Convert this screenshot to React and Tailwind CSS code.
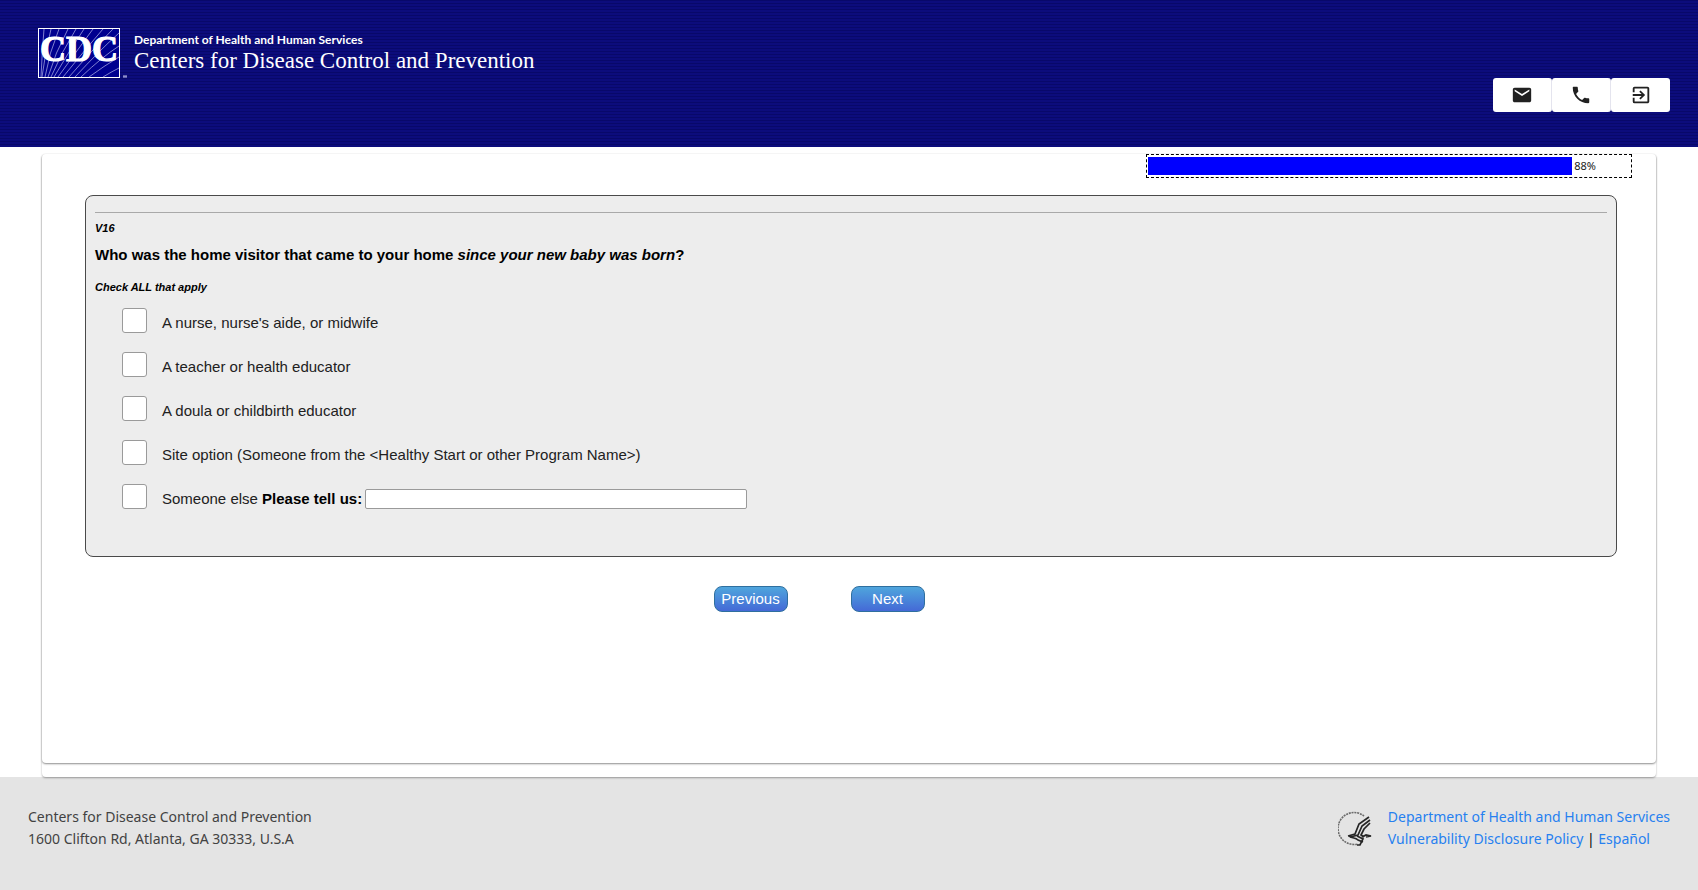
import { useState } from "react"
import { MdEmail, MdPhone, MdExitToApp } from "react-icons/md"

const options = [
    { id: "nurse", label: "A nurse, nurse's aide, or midwife" },
    { id: "teacher", label: "A teacher or health educator" },
    { id: "doula", label: "A doula or childbirth educator" },
    { id: "site", label: "Site option (Someone from the <Healthy Start or other Program Name>)" },
]

const checkboxStyle = "h-[25px] w-[25px] shrink-0 appearance-none rounded-[3px] border border-[#9a9a9a] bg-white checked:bg-[#0075ff]"

const CdcLogo = () => (
    <svg width="90" height="50" viewBox="0 0 90 50" role="img" aria-label="CDC">
        <rect x="0.5" y="0.5" width="81" height="49" fill="#00008f" stroke="#fff" />
        <g stroke="#8c8cd6" strokeWidth="0.9" fill="none">
            <path d="M6 1 Q4 25 3 49" />
            <path d="M13 1 Q7 25 4 49" />
            <path d="M21 1 Q11 25 7 49" />
            <path d="M30 1 Q17 25 10 49" />
            <path d="M38 1 Q23 25 13 49" />
            <path d="M46 1 Q30 25 16 49" />
            <path d="M55 1 Q38 24 20 49" />
            <path d="M65 1 Q46 23 25 49" />
            <path d="M75 1 Q54 22 31 49" />
            <path d="M81 5 Q62 22 37 49" />
            <path d="M81 18 Q64 29 43 49" />
            <path d="M81 29 Q66 38 51 49" />
            <path d="M81 40 Q73 44 65 49" />
        </g>
        <text x="41" y="33" textAnchor="middle" fill="#fff" stroke="#fff" strokeWidth="1.2" fontFamily="Liberation Serif, serif" fontWeight="700" fontSize="36">CDC</text>
        <path d="M85 48 h4 M86 48 v2 M88 48 v2" stroke="#b9b9e6" strokeWidth="1" />
    </svg>
)

const HhsSeal = () => (
    <svg width="34" height="36" viewBox="0 0 34 36" role="img" aria-label="HHS">
        <path d="M26 5 A16 16 0 1 0 20 33" fill="none" stroke="#6b6b6b" strokeWidth="1.6" strokeDasharray="2 0.8" />
        <g fill="none" stroke="#262626" strokeWidth="1.7">
            <path d="M31 6 L21 13 L17 23 L10 25" />
            <path d="M32 9 L24 15 L20 24 L12 26" />
            <path d="M32 12 L26 18 L23 24 L26 26" />
            <path d="M11 25 C15 28 17 26 20 29 L25 31" />
            <path d="M19 25 L25 28 L22 34 L19 34" />
            <path d="M24 26 L28 24 L33 25 L28 26" />
        </g>
    </svg>
)

const Header = () => (
    <header className="flex h-[147px] items-start justify-between bg-[#0a0a78] bg-[repeating-linear-gradient(to_bottom,#08086a_0px,#08086a_1px,#0c0c7c_1px,#0c0c7c_3px)] pl-[38px] pr-7">
        <div className="flex items-start gap-[6px] pt-7 text-white">
            <CdcLogo />
            <div className="pt-1">
                <p className="font-[Lato] text-[12px] leading-4 font-bold">Department of Health and Human Services</p>
                <p className="font-['Liberation_Serif'] text-[23px] leading-[26px]">Centers for Disease Control and Prevention</p>
            </div>
        </div>
        <nav className="flex pt-[78px] text-[#212121]">
            <button aria-label="Email" className="flex h-[34px] w-[59px] items-center justify-center rounded-[3px] border-r border-[#e4e4ee] bg-white"><MdEmail size={22} /></button>
            <button aria-label="Phone" className="flex h-[34px] w-[59px] items-center justify-center rounded-[3px] border-r border-[#e4e4ee] bg-white"><MdPhone size={22} /></button>
            <button aria-label="Exit" className="flex h-[34px] w-[59px] items-center justify-center rounded-[3px] bg-white"><MdExitToApp size={22} /></button>
        </nav>
    </header>
)

const ProgressBar = ({ percent }) => (
    <div className="mr-6 ml-auto flex h-6 w-[486px] items-center border border-dashed border-black p-px" role="progressbar" aria-label="Survey progress" aria-valuenow={percent}>
        <div className="h-[18px] bg-[#0000ff]" style={{ width: `${percent}%` }}></div>
        <span className="ml-[2px] font-['Noto_Sans'] text-[11px] leading-4 text-[#212121]">{percent}%</span>
    </div>
)

const Question = () => {
    const [selected, setSelected] = useState([])
    const [other, setOther] = useState("")

    const handleToggle = (id) => {
        setSelected(selected.includes(id) ? selected.filter(item => item !== id) : [...selected, id])
    }

    return (
        <section className="mt-[17px] mr-[39px] ml-[43px] rounded-lg border border-[#4a4a4a] bg-[#ededed] px-[9px] pt-4 pb-[45px] font-['Liberation_Sans'] text-black">
            <hr className="border-[#a9a9a9]" />
            <p className="mt-[7px] text-[11px] leading-4 font-bold italic">V16</p>
            <h1 className="mt-[9px] text-[15px] leading-5 font-bold">
                Who was the home visitor that came to your home <em>since your new baby was born</em>?
            </h1>
            <p className="mt-[14px] text-[11px] leading-4 font-bold italic">Check ALL that apply</p>
            <ul className="mt-[13px] ml-[27px] flex flex-col gap-[17px] text-[15px] leading-[25px] text-[#212121]">
                {options.map(option => (
                    <li key={option.id} className="flex items-start gap-[15px]">
                        <input id={option.id} type="checkbox" className={checkboxStyle} checked={selected.includes(option.id)} onChange={() => handleToggle(option.id)} />
                        <label htmlFor={option.id} className="pt-0.5">{option.label}</label>
                    </li>
                ))}
                <li className="flex items-start gap-[15px]">
                    <input id="other" type="checkbox" className={checkboxStyle} checked={selected.includes("other")} onChange={() => handleToggle("other")} />
                    <div className="flex items-center gap-[3px] pt-0.5">
                        <label htmlFor="other">Someone else <b className="text-black">Please tell us:</b></label>
                        <input type="text" aria-label="Please tell us" className="h-5 w-[382px] rounded-[2px] border border-[#9a9a9a] bg-white px-1" value={other} onChange={(e) => setOther(e.target.value)} />
                    </div>
                </li>
            </ul>
        </section>
    )
}

const NavButton = ({ children }) => (
    <button className="h-[26px] w-[74px] rounded-lg border border-[#2f6f9f] bg-linear-to-b from-[#4fa5dc] to-[#4569d6] font-['Liberation_Sans'] text-[15px] leading-5 text-white">{children}</button>
)

const Footer = () => (
    <footer className="flex grow items-start justify-between bg-[#e4e4e4] px-7 pt-[29px] pb-10 font-['Noto_Sans'] text-[14px] leading-[22px] text-[#424242]">
        <address className="not-italic">
            Centers for Disease Control and Prevention
            <br />
            1600 Clifton Rd, Atlanta, GA 30333, U.S.A
        </address>
        <div className="flex items-start gap-4">
            <div className="pt-[5px]"><HhsSeal /></div>
            <div>
                <a href="#hhs" className="text-[#2680f0]">Department of Health and Human Services</a>
                <br />
                <a href="#policy" className="text-[#2680f0]">Vulnerability Disclosure Policy</a>
                <span className="text-black"> | </span>
                <a href="#es" className="text-[#2680f0]">Español</a>
            </div>
        </div>
    </footer>
)

const App = () => (
    <div className="flex min-h-screen flex-col bg-white">
        <Header />
        <main className="relative mx-[42px] mt-[7px] rounded bg-white pb-[14px] shadow-[0_1px_2px_rgba(0,0,0,0.35)]">
            <div className="min-h-[609px] rounded bg-white shadow-[0_1px_2px_rgba(0,0,0,0.45)]">
                <ProgressBar percent={88} />
                <Question />
                <div className="mt-[29px] flex justify-center gap-[63px] pr-[60px]">
                    <NavButton>Previous</NavButton>
                    <NavButton>Next</NavButton>
                </div>
            </div>
        </main>
        <Footer />
    </div>
)

export default App
